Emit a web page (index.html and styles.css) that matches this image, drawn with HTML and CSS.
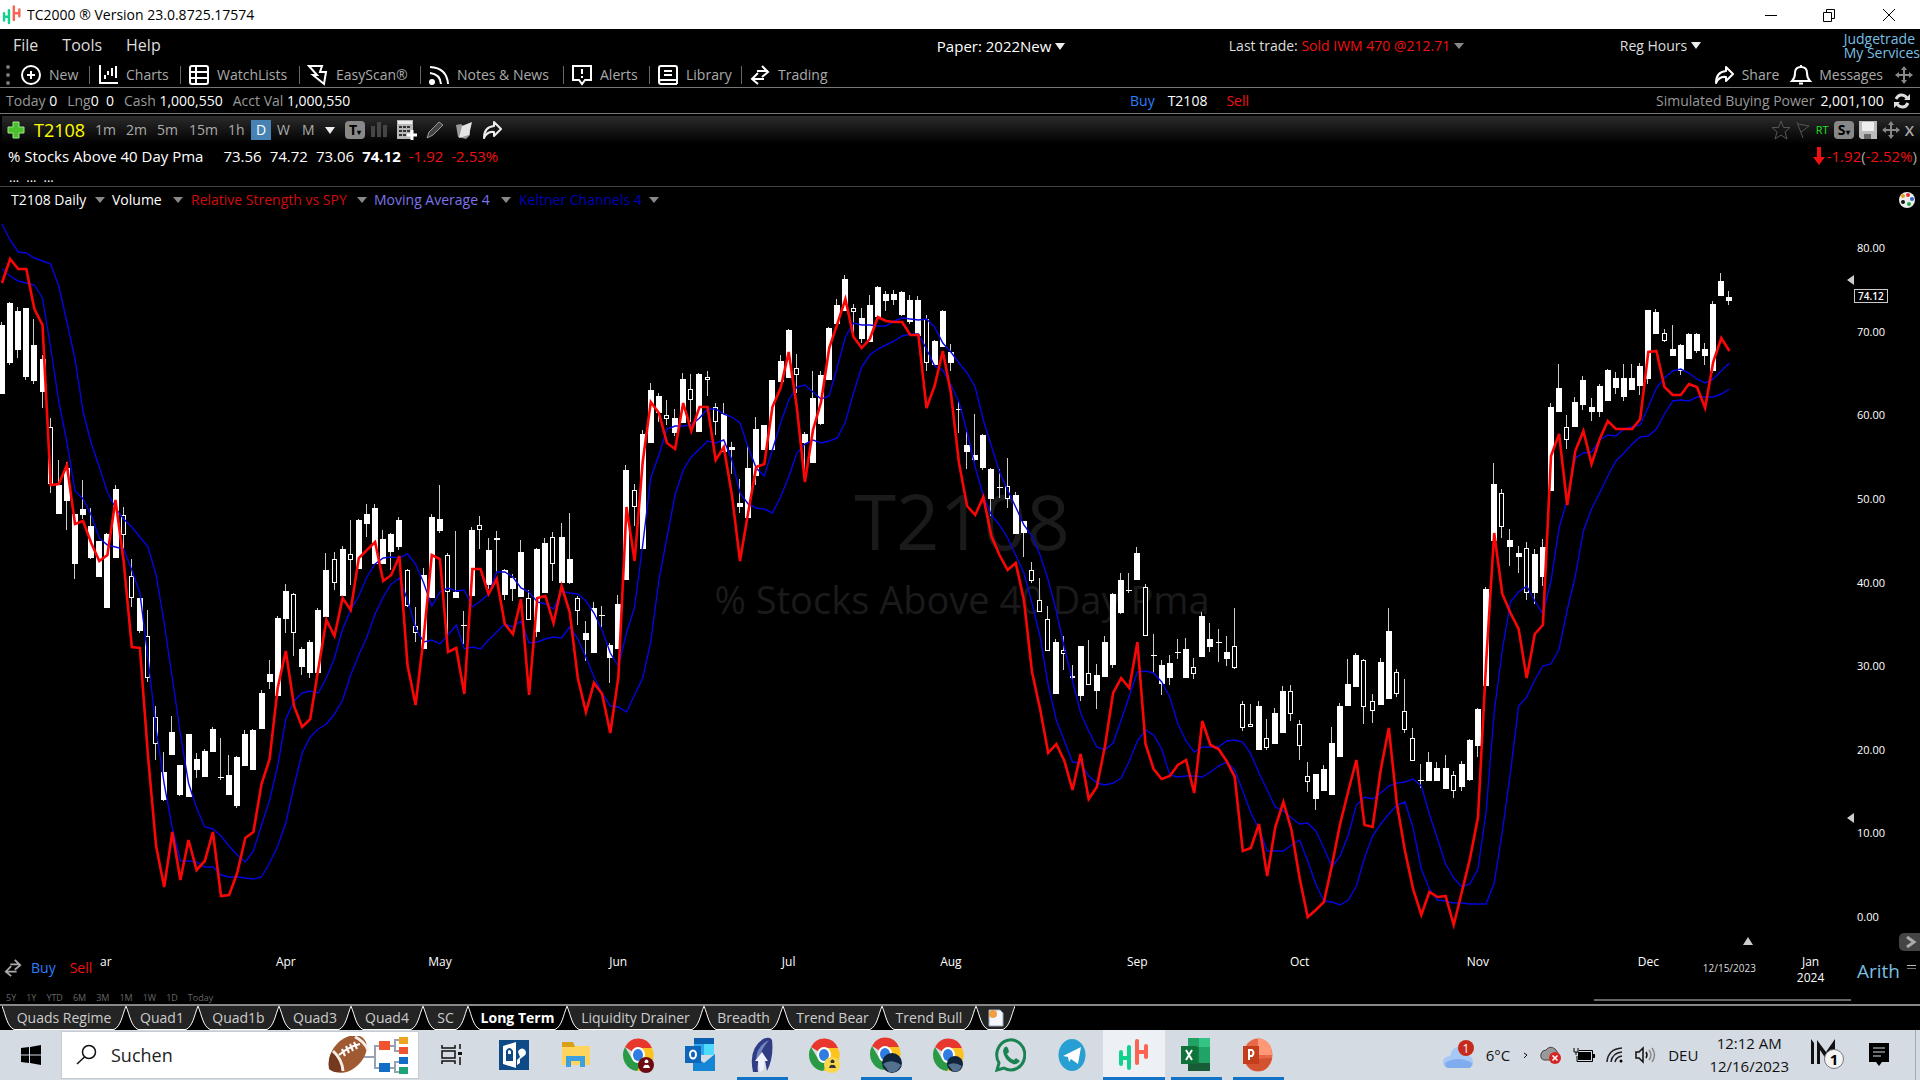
FILE: index.html
```html
<!DOCTYPE html>
<html lang="en">
    <head>
        <title>TC2000 &reg; Version 23.0.8725.17574</title>
        <meta charset="utf-8">
        <meta name="viewport" content="width=device-width, initial-scale=1">
        <link rel="stylesheet" href="styles.css">
    </head>
    <body>
        <!-- shared shapes -->
        <svg class="defs" width="0" height="0" aria-hidden="true">
            <symbol id="logo" viewBox="0 0 32 36">
                <g fill="none" stroke-width="4" stroke-linecap="round">
                    <path d="M3 15V27M11 10V31M3 21H11" stroke="#12d18c"/>
                    <path d="M19 4V26M28 9V20M19 15H28" stroke="#fb6450"/>
                </g>
            </symbol>
            <symbol id="share" viewBox="0 0 20 20">
                <path d="M12 2L19 9L12 16V12Q5 11 2 18Q2 7 12 6Z" fill="none" stroke="currentColor" stroke-width="2" stroke-linejoin="round"/>
            </symbol>
            <symbol id="swap" viewBox="0 0 20 20">
                <g fill="none" stroke="currentColor" stroke-width="2">
                    <path d="M7 6H18M12 1L18 7L12 12"/>
                    <path d="M14 14H2M8 8L2 14L8 19"/>
                </g>
            </symbol>
            <symbol id="move" viewBox="0 0 18 18">
                <path d="M9 0L12 4H10V8H14V6L18 9L14 12V10H10V14H12L9 18L6 14H8V10H4V12L0 9L4 6V8H8V4H6Z" fill="currentColor"/>
            </symbol>
            <symbol id="chrome" viewBox="0 0 32 36">
                <path d="M16 18L3 10A15 16 0 0 1 30 11H16Z" fill="#e8382d"/>
                <path d="M30 11A15 16 0 0 1 15 34L22 21L16 11Z" fill="#fcc31e"/>
                <path d="M3 10A15 16 0 0 0 15 34L22 22L9 20Z" fill="#2a9a47"/>
                <ellipse cx="16" cy="18" rx="7" ry="8" fill="#fff"/>
                <ellipse cx="16" cy="18" rx="5" ry="6" fill="#2f7de1"/>
            </symbol>
        </svg>

        <header class="titlebar">
            <svg class="app-logo"><use href="#logo"/></svg>
            <span class="app-title">TC2000 &reg; Version 23.0.8725.17574</span>
            <button class="win-btn" aria-label="Minimize"><svg width="14" height="14"><path d="M1 7.500H13" stroke="#000"/></svg></button>
            <button class="win-btn" aria-label="Restore"><svg width="14" height="14" fill="none" stroke="#000"><path d="M1.500 4.500H9.500V13.500H1.500ZM4.500 4V1.500H12.500V10.500H10"/></svg></button>
            <button class="win-btn" aria-label="Close"><svg width="14" height="14"><path d="M1 1L13 13M13 1L1 13" stroke="#000"/></svg></button>
        </header>

        <nav class="menubar">
            <div class="menus"><button>File</button><button>Tools</button><button>Help</button></div>
            <button class="account">Paper: 2022New <i class="arrow"></i></button>
            <button class="last-trade">Last trade: <span class="down">Sold IWM 470 @212.71</span> <i class="arrow dim"></i></button>
            <button class="hours">Reg Hours <i class="arrow"></i></button>
            <div class="links"><a href="#">Judgetrade</a><a href="#">My Services</a></div>
        </nav>

        <div class="toolbar">
            <div class="tools">
                <svg class="grip" width="6" height="20" fill="#777"><circle cx="3" cy="2" r="2"/><circle cx="3" cy="10" r="2"/><circle cx="3" cy="18" r="2"/></svg>
                <button><svg viewBox="0 0 20 20"><circle cx="10" cy="10" r="9"/><path d="M10 6V14M6 10H14"/></svg>New</button>
                <button><svg viewBox="0 0 20 20"><path d="M2 0V18H20M7 10V14M10 6V10M14 3V11M18 1V13"/></svg>Charts</button>
                <button><svg viewBox="0 0 20 20"><rect x="1" y="1" width="18" height="18" rx="2"/><path d="M7 1V19M1 7H19M1 13H19"/></svg>WatchLists</button>
                <button><svg viewBox="0 0 20 20"><path d="M1 1H14L12 7H18L16 19L5 10H9Z"/></svg>EasyScan&reg;</button>
                <button><svg viewBox="0 0 20 20"><circle cx="3" cy="17" r="2" fill="#fff"/><path d="M1 8Q11 9 12 19M1 2Q18 3 19 19"/></svg>Notes &amp; News</button>
                <button><svg viewBox="0 0 20 20"><path d="M1 1H19V15H13L10 19L7 15H1ZM10 4V9M10 11V13"/></svg>Alerts</button>
                <button><svg viewBox="0 0 20 20"><path d="M19 15H3Q1 15 1 17Q1 19 3 19H19M1 17V3Q1 1 3 1H17Q19 1 19 3V19M6 6H14M6 10H14"/></svg>Library</button>
                <button><svg><use href="#swap"/></svg>Trading</button>
            </div>
            <div class="tools-right">
                <button><svg><use href="#share"/></svg>Share</button>
                <button><svg viewBox="0 0 20 20"><path d="M1 16Q4 13 4 8Q4 2 10 2Q16 2 16 8Q16 13 19 16ZM10 0V2M8 18.500H12"/></svg>Messages</button>
                <svg class="move"><use href="#move"/></svg>
            </div>
        </div>

        <div class="balance">
            <div class="balance-left">
                <span>Today <b>0</b></span><span>Lng<b>0&nbsp; 0</b></span><span>Cash <b>1,000,550</b></span><span>Acct Val <b>1,000,550</b></span>
            </div>
            <div class="order"><button class="buy">Buy</button><b>T2108</b><button class="sell">Sell</button></div>
            <div class="power">Simulated Buying Power <b>2,001,100</b>
                <svg width="18" height="18" viewBox="0 0 18 18" fill="none" stroke="#ddd" stroke-width="3"><path d="M3 7Q6 1 12 4L14 6M15 11Q12 17 6 14L4 12"/><path d="M11 8H17V2ZM7 10H1V16Z" fill="#ddd" stroke="none"/></svg>
            </div>
        </div>

        <main class="chart">
            <div class="chart-head">
                <div class="frames">
                    <svg width="18" height="18" viewBox="0 0 18 18"><path d="M6 1H12V6H17V12H12V17H6V12H1V6H6Z" fill="#4cc02c" stroke="#a0e890"/></svg>
                    <span class="symbol">T2108</span>
                    <button>1m</button><button>2m</button><button>5m</button><button>15m</button><button>1h</button>
                    <button class="active">D</button><button>W</button><button>M</button>
                    <i class="arrow"></i>
                    <button class="chip" aria-label="Template">T<small>&#9662;</small></button>
                    <svg width="18" height="18" fill="#454545"><path d="M1 5H5V16H1ZM7 1H11V16H7ZM13 4H17V16H13Z"/></svg>
                    <svg width="20" height="20"><path d="M0 0H16V19H0Z" fill="#b8b8b8"/><path d="M1 1H15V4H1Z" fill="#eee"/><path d="M2 7H14M2 11H14M2 15H10" stroke="#333" stroke-width="2" stroke-dasharray="3 1"/><path d="M15 10V20M10 15H20" stroke="#fff" stroke-width="3"/></svg>
                    <svg width="18" height="18"><path d="M1 17L3 11L13 1L17 4L7 14Z" fill="#444" stroke="#999"/></svg>
                    <svg width="20" height="18"><path d="M2 4L7 3L9 5L16 2V14L12 18L4 16Z" fill="#999"/><path d="M8 5L18 1L15 14L5 17Z" fill="#e4e4e4"/></svg>
                    <svg class="share" width="20" height="20"><use href="#share"/></svg>
                </div>
                <div class="head-right">
                    <svg width="20" height="20" fill="none" stroke="#555"><path d="M10 1L12.500 7.500H19L14 12L16 19L10 15L4 19L6 12L1 7.500H7.500Z"/></svg>
                    <svg width="15" height="18" fill="none" stroke="#555"><path d="M1 1L7 17M2 3L13 5L5 11"/></svg>
                    <span class="rt">RT</span>
                    <button class="chip" aria-label="Style">S<small>&#9662;</small></button>
                    <svg width="18" height="18"><path d="M0 0H18V18H2L0 16Z" fill="#bbb"/><path d="M3 1H15V10H3Z" fill="#eee"/><path d="M5 13H12V18H5Z" fill="#666"/></svg>
                    <svg class="move"><use href="#move"/></svg>
                    <button class="close" aria-label="Close chart">X</button>
                </div>
            </div>

            <div class="quote">
                <span class="quote-name">% Stocks Above 40 Day Pma</span>
                <span>73.56</span><span>74.72</span><span>73.06</span><strong>74.12</strong>
                <span class="down">-1.92</span><span class="down">-2.53%</span>
                <span class="change"><svg width="12" height="18"><path d="M4 0H8V10H12L6 18L0 10H4Z" fill="#f01010"/></svg><span class="down">-1.92</span>(<span class="down">-2.52%</span>)</span>
            </div>
            <div class="more"><span>...</span><span>...</span><span>...</span></div>

            <div class="studies">
                <button>T2108 Daily</button><i class="arrow dim"></i>
                <button>Volume</button><i class="arrow dim"></i>
                <button class="rs">Relative Strength vs SPY</button><i class="arrow dim"></i>
                <button class="ma">Moving Average 4</button><i class="arrow dim"></i>
                <button class="kc">Keltner Channels 4</button><i class="arrow dim"></i>
                <svg class="palette" width="18" height="18"><circle cx="9" cy="9" r="8" fill="#eee"/><circle cx="5" cy="5" r="2" fill="#e0a020"/><circle cx="10" cy="4" r="2" fill="#d33"/><circle cx="14" cy="8" r="2" fill="#36c"/><circle cx="11" cy="13" r="2" fill="#2a4"/><circle cx="5" cy="11" r="2" fill="#111"/></svg>
            </div>

            <div class="stage">
                <div class="plot">
                    <div class="watermark"><div class="wm-symbol">T2108</div><div class="wm-name">% Stocks Above 40 Day Pma</div></div>
                    <svg id="plot" viewBox="0 215 1850 725" preserveAspectRatio="none"></svg>
                    <i class="range-mark range-top"></i>
                    <i class="range-mark range-bottom"></i>
                    <i class="date-mark"></i>
                </div>
                <div class="prices">
                    <span>80.00</span><span>70.00</span><span>60.00</span><span>50.00</span><span>40.00</span><span>30.00</span><span>20.00</span><span>10.00</span><span>0.00</span>
                    <div class="last-price">74.12</div>
                    <button class="scroll-end" aria-label="Scroll to end"><svg width="12" height="14" fill="none" stroke="#aaa" stroke-width="3"><path d="M2 2L9 7L2 12"/></svg></button>
                </div>
            </div>

            <div class="timeline">
                <div class="dates" id="dates"></div>
                <div class="scale"><button>Arith</button><i></i></div>
                <div class="quick"><svg width="18" height="20"><use href="#swap"/></svg><button class="buy">Buy</button><button class="sell">Sell</button></div>
                <div class="spans"><button>5Y</button><button>1Y</button><button>YTD</button><button>6M</button><button>3M</button><button>1M</button><button>1W</button><button>1D</button><button>Today</button></div>
                <div class="scrollbar"></div>
            </div>
        </main>

        <nav class="tabs" id="tabs">
            <button>Quads Regime</button>
            <button>Quad1</button>
            <button>Quad1b</button>
            <button>Quad3</button>
            <button>Quad4</button>
            <button>SC</button>
            <button class="current">Long Term</button>
            <button>Liquidity Drainer</button>
            <button>Breadth</button>
            <button>Trend Bear</button>
            <button>Trend Bull</button>
            <button aria-label="New layout"><svg class="new-tab" width="16" height="18"><path d="M1 1H12L15 4V17H1Z" fill="#f4f6ff" stroke="#9ab"/><circle cx="5" cy="5" r="4" fill="#f0a040"/></svg></button>
        </nav>

        <footer class="taskbar">
            <button class="start" aria-label="Start"><svg width="20" height="20"><path d="M0 3L8 2V9.500H0ZM9 2L20 0V9.500H9ZM0 10.500H8V18L0 17ZM9 10.500H20V20L9 18Z"/></svg></button>
            <label class="search">
                <svg width="22" height="22" fill="none" stroke="#111" stroke-width="1.500"><circle cx="13" cy="8" r="6.500"/><path d="M8.500 13L1 20"/></svg>
                <input type="text" placeholder="Suchen" aria-label="Suchen">
                <svg class="doodle" width="84" height="38" viewBox="0 0 84 38">
                    <path d="M38 21H49V10H54M49 21V32H54M63 10H69V4H75M69 10V15H75M63 32H69V26H75M69 32V36H75" fill="none" stroke="#98a2b4" stroke-width="2"/>
                    <ellipse cx="22" cy="18" rx="15" ry="22" transform="rotate(45 22 18)" fill="#a05a32"/>
                    <path d="M3 33Q1 22 7 15Q16 23 17 35Q8 38 3 33Z" fill="#74391f"/>
                    <path d="M7 15Q16 23 17 35M29 1Q38 5 42 14" fill="none" stroke="#f6efe8" stroke-width="3"/>
                    <path d="M13 19Q22 11 34 8M16 13L19 20M20 10L23 17M24 8L27 15M28 6L31 13" fill="none" stroke="#fff" stroke-width="2"/>
                    <path d="M53 5H64V14H53ZM73 11H82V18H73Z" fill="#f0532d"/><path d="M73 1H82V8H73Z" fill="#efa41d"/>
                    <path d="M53 27H64V36H53ZM73 21H82V28H73Z" fill="#126dc4"/><path d="M73 31H82V38H73Z" fill="#1da377"/>
                </svg>
            </label>
            <button class="app" aria-label="Task view"><svg width="22" height="22" fill="none" stroke="#111" stroke-width="1.500"><path d="M1 1V4H14V1M1 20V17H14V20M1 7H14V14H1ZM19 0V5M19 13V21"/><path d="M17 8H21V11H17Z" fill="#111" stroke="none"/></svg></button>
            <button class="app" aria-label="Password manager"><svg width="30" height="30"><path d="M0 0H30V30H0Z" fill="#0e4a85"/><path d="M4 6L17 2V28L4 24ZM19 12a4 4 0 1 1 6 4L21 19V23L18 25V20L21 17Z" fill="#fff"/><path d="M7 14H14V21H7Z" fill="#0e4a85"/><path d="M8 14V11Q10 7 13 11V14" fill="none" stroke="#0e4a85" stroke-width="2"/></svg></button>
            <button class="app" aria-label="Explorer"><svg width="28" height="26"><path d="M0 2H11L13 4H28V23H0Z" fill="#ffd560"/><path d="M0 0H11L13 5H0Z" fill="#d8a018"/><path d="M4 25V14H23V25H18V19H9V25Z" fill="#3c9fdf"/></svg></button>
            <button class="app" aria-label="Chrome"><svg width="32" height="36"><use href="#chrome"/><circle cx="24" cy="28" r="8" fill="#6c0c12"/><path d="M21 31H28Q27 27 24.500 28Q22 27 21 31M23 26a2 2 0 1 1 3 0Z" fill="#fff"/></svg></button>
            <button class="app" aria-label="Outlook"><svg width="30" height="34"><path d="M9 0H29V17H9Z" fill="#0a5faf"/><path d="M9 6H19V17H9Z" fill="#28a8ea"/><path d="M19 6H29V17H19Z" fill="#50d9ff"/><path d="M8 17L19 25L30 16V33H8Z" fill="#1685d6"/><path d="M0 8H16V25H0Z" fill="#0e66ba"/><ellipse cx="8" cy="16.500" rx="3" ry="4" fill="none" stroke="#fff" stroke-width="2"/></svg></button>
            <button class="app run" aria-label="Feather"><svg width="24" height="36"><path d="M3 35Q-2 12 13 2Q20 -1 22 3Q24 20 17 34L15 23Q12 15 9 22Q7 28 8 35Z" fill="#303c84"/><path d="M6 24Q6 9 19 3Q12 12 11 16Z" fill="#7184bd"/><path d="M10 35L8 24H5L12 15L18 24H14V32Z" fill="#eef2fa"/></svg></button>
            <button class="app" aria-label="Chrome"><svg width="32" height="36"><use href="#chrome"/><circle cx="24" cy="28" r="8" fill="#f9d84b"/><path d="M21 31H28Q27 27 24.500 28Q22 27 21 31M23 26a2 2 0 1 1 3 0Z" fill="#333"/></svg></button>
            <button class="app run" aria-label="Chrome"><svg width="34" height="38"><use href="#chrome" width="32" height="36"/><circle cx="23" cy="27" r="10" fill="#10243c"/><path d="M14 28Q22 22 32 29Q28 38 20 36Z" fill="#52718f"/></svg></button>
            <button class="app" aria-label="Chrome"><svg width="32" height="36"><use href="#chrome"/><circle cx="23" cy="27" r="8" fill="#10243c"/><path d="M16 28Q22 24 30 29Q27 36 21 34Z" fill="#52718f"/></svg></button>
            <button class="app" aria-label="WhatsApp"><svg width="32" height="38"><path d="M3 34L5 27A14 15 0 1 1 10 32Z" fill="none" stroke="#1a8352" stroke-width="3"/><path d="M10 12Q12 9 14 12L15 16L13 18Q16 23 20 24L22 22L26 25Q23 29 19 28Q10 24 9 15Z" fill="#1a8352"/></svg></button>
            <button class="app" aria-label="Telegram"><svg width="28" height="34"><ellipse cx="14" cy="17" rx="13.500" ry="16" fill="#279fd3"/><path d="M5 18L23 9L20 26L13 21L11 24L10 19Z" fill="#fff"/></svg></button>
            <button class="app run focus" aria-label="TC2000"><svg width="32" height="36"><use href="#logo"/></svg></button>
            <button class="app run" aria-label="Excel"><svg width="30" height="34"><path d="M7 0H29V33H7Z" fill="#21a366"/><path d="M7 9H18V25H7Z" fill="#107c41"/><path d="M18 0H29V9H18Z" fill="#33c481"/><path d="M7 25H29V33H7Z" fill="#185c37"/><path d="M0 8H16V26H0Z" fill="#0f7238"/><path d="M5 12L11 22M11 12L5 22" stroke="#fff" stroke-width="2"/></svg></button>
            <button class="app run" aria-label="PowerPoint"><svg width="30" height="34"><ellipse cx="15" cy="17" rx="14.500" ry="16.500" fill="#e8694a"/><path d="M15 0Q29 2 29 17H15Z" fill="#ff9877"/><path d="M2 24Q12 20 29 20Q26 33 15 33Q6 33 2 24Z" fill="#d35230"/><path d="M0 8H16V26H0Z" fill="#c43e1c"/><path d="M6 22V12H9Q12 14.500 9 18H6" fill="none" stroke="#fff" stroke-width="2"/></svg></button>

            <div class="tray">
                <svg width="32" height="32"><path d="M6 29Q0 29 0 23Q0 18 7 17Q9 7 17 8Q23 9 24 16Q31 18 30 25Q29 29 25 29Z" fill="#a5c8f5"/><path d="M2 24Q15 16 29 24Q29 29 25 29H6Q2 29 2 24Z" fill="#7eacec"/><circle cx="23" cy="9" r="8" fill="#c42b1c"/><text x="23" y="14" class="badge-text" fill="#fff">1</text></svg>
                <span>6&deg;C</span>
                <svg width="8" height="10"><path d="M3 3L6 5L3 8" fill="none" stroke="#111"/></svg>
                <svg width="22" height="20"><path d="M4 15Q0 14 1 9Q2 5 6 5Q10 0 15 4Q19 7 18 12L10 15Z" fill="#999" stroke="#444"/><circle cx="15" cy="13" r="6" fill="#d42424"/><path d="M12.500 10.500L17.500 15.500M17.500 10.500L12.500 15.500" stroke="#fff" stroke-width="1.500"/></svg>
                <svg width="22" height="16"><path d="M5 5H18V13H5ZM20 7H22V11H20Z" fill="#000"/><path d="M6 3.500H19.500V14.500H4V9M1 1V5H5V1M3 5V8" fill="none" stroke="#000"/></svg>
                <svg width="18" height="18" fill="none" stroke="#222" stroke-width="1.500"><path d="M1 16Q2 3 16 2M5 16Q6 7 16 6M9 16Q10 11 16 10"/><circle cx="15" cy="15" r="1.500" fill="#000" stroke="none"/></svg>
                <svg width="22" height="18" fill="none" stroke="#111" stroke-width="1.500"><path d="M1 6H4L8 2V16L4 12H1Z"/><path d="M11 6Q13 9 11 12"/><path d="M14 4Q18 9 14 14M17 2Q22 9 17 16" stroke="#888"/></svg>
                <span>DEU</span>
                <time>12:12 AM<br>12/16/2023</time>
                <svg class="mail" width="34" height="36"><path d="M1 2L4 6V27H1ZM7 3L16 15L25 2V27H21V12L16 22L10 13V27H7Z" fill="#111"/><circle cx="24" cy="22" r="9.500" fill="#f4f4f4" stroke="#777"/><text x="24" y="28" class="count-text">1</text></svg>
                <svg width="20" height="24"><path d="M0 0H20V19H13L10 23L7 19H0Z"/><path d="M4 5H16M4 9H16M4 13H12" stroke="#d5dbe3"/></svg>
            </div>
        </footer>

        <script src="chart.js"></script>
    </body>
</html>
```
FILE: styles.css
```css
* {
box-sizing: border-box;
}
body {
margin: 0;
min-height: 100vh;
display: flex;
flex-direction: column;
overflow: hidden;
background: #000;
color: #ccc;
font: 14px/20px "Open Sans", "Noto Sans", sans-serif;
}
button {
padding: 0;
border: 0;
background: none;
color: inherit;
font: inherit;
text-align: left;
white-space: nowrap;
}
b {
font-weight: normal;
color: #fff;
}
a {
color: #79bfe0;
text-decoration: none;
}
svg {
display: block;
flex: none;
}
.defs {
position: absolute;
}
.down, .sell {
color: #f01010;
}
.buy {
color: #2a7fff;
}
.arrow {
display: inline-block;
width: 0;
border: 5px solid transparent;
border-top: 7px solid #eee;
border-bottom: 0;
}
.account .arrow, .last-trade .arrow, .hours .arrow {
margin-bottom: 2px;
}
.arrow.dim {
border-width: 5px;
border-top: 6px solid #888;
border-bottom: 0;
}

/* title bar */
.titlebar {
height: 29px;
display: flex;
align-items: center;
background: #fff;
color: #000;
}
.app-logo {
width: 20px;
height: 22px;
margin: 0 5px 0 2px;
}
.app-title {
margin-right: auto;
}
.win-btn {
width: 58px;
height: 29px;
display: grid;
place-items: center;
}
.win-btn:last-child {
width: 62px;
}

/* menu */
.menubar {
height: 33px;
display: grid;
grid-template-columns: 937fr 292fr 391fr 224fr 76fr;
align-items: center;
color: #ddd;
}
.menus {
display: flex;
gap: 24px;
padding: 0 0 2px 13px;
font-size: 16px;
}
.account {
font-size: 15px;
color: #fff;
}
.links {
display: grid;
font-size: 14px;
line-height: 14px;
white-space: nowrap;
}

/* toolbar */
.toolbar {
height: 26px;
display: flex;
justify-content: space-between;
border-bottom: 1px solid #777;
color: #aaa;
}
.tools {
display: grid;
grid-template-columns: 21px 77px 91px 119px 121px 143px 86px 92px 90px;
align-items: center;
}
.grip {
margin-left: 5px;
}
.toolbar button {
display: flex;
align-items: center;
gap: 8px;
height: 25px;
}
.tools button + button {
position: relative;
}
.tools button + button::before {
content: "";
position: absolute;
left: -9px;
height: 18px;
border-left: 1px solid #666;
}
.toolbar button svg {
width: 20px;
height: 20px;
fill: none;
stroke: #fff;
stroke-width: 2;
color: #fff;
overflow: visible;
}
.toolbar use {
stroke: none;
}
.tools-right {
display: flex;
align-items: center;
gap: 12px;
padding-right: 7px;
}
.move {
width: 18px;
height: 18px;
color: #888;
}

/* account balance */
.balance {
height: 26px;
display: grid;
grid-template-columns: 1130fr 526fr 264fr;
align-items: center;
border-bottom: 1px solid #777;
color: #999;
}
.balance-left {
display: flex;
gap: 10px;
padding-left: 6px;
}
.order {
display: flex;
gap: 13px;
}
.order .sell {
margin-left: 6px;
}
.power {
display: flex;
align-items: center;
gap: 6px;
white-space: nowrap;
}
.power svg {
margin-left: 3px;
}

/* chart header */
.chart {
flex: 1;
display: flex;
flex-direction: column;
}
.chart-head {
height: 28px;
margin: 2px 0 0 2px;
display: flex;
justify-content: space-between;
align-items: center;
background: linear-gradient(#2b2b2b, #000);
color: #aaa;
}
.frames {
display: grid;
grid-template-columns: 27px 61px 31px 31px 32px 39px 23px 26px 25px 23px 20px 25px 27px 29px 28px 28px 20px;
align-items: center;
padding-left: 5px;
}
.symbol {
color: #ff0;
font-size: 18px;
}
.frames .active {
width: 20px;
background: #4682b4;
color: #fff;
text-align: center;
}
.chip {
width: 20px;
height: 18px;
border-radius: 4px;
background: #888;
color: #000;
font-weight: bold;
line-height: 18px;
text-align: center;
}
.chip small {
font-size: 8px;
}
.share {
color: #eee;
}
.head-right {
display: flex;
align-items: center;
gap: 5px;
padding-right: 6px;
}
.rt {
color: #1be01b;
font-size: 11px;
}
.close {
font-size: 15px;
font-weight: 600;
}
.quote {
height: 24px;
display: flex;
align-items: center;
gap: 8px;
padding: 0 3px 0 8px;
color: #fff;
font-size: 15px;
}
.quote-name {
margin-right: 12px;
}
.change {
display: flex;
align-items: center;
margin-left: auto;
color: #aaa;
}
.change svg {
margin-right: 2px;
}
.more {
height: 19px;
display: flex;
gap: 7px;
padding-left: 9px;
border-bottom: 1px solid #444;
color: #fff;
font-size: 13px;
line-height: 18px;
}
.studies {
height: 28px;
display: grid;
grid-template-columns: 84px 17px 61px 18px 166px 17px 127px 18px 130px 20px 1fr;
align-items: center;
padding: 0 4px 2px 11px;
color: #fff;
}
.rs {
color: #d00c0c;
}
.ma {
color: #7c74e8;
}
.kc {
color: #0000b8;
}
.palette {
justify-self: end;
}

/* plot */
.stage {
flex: 1;
display: grid;
grid-template-columns: 1fr 70px;
}
.plot {
position: relative;
display: grid;
}
#plot {
position: absolute;
inset: 0;
width: 100%;
height: 100%;
}
.watermark {
align-self: center;
padding: 0 0 45px 74px;
color: #1a1a1a;
text-align: center;
}
.wm-symbol {
font-size: 76px;
line-height: 88px;
}
.wm-name {
font-size: 38px;
line-height: 68px;
}
.range-mark {
position: absolute;
right: -4px;
border: 5px solid transparent;
border-right: 7px solid #ccc;
border-left: 0;
}
.range-top {
top: 60px;
}
.range-bottom {
bottom: 117px;
}
.date-mark {
position: absolute;
right: 97px;
bottom: -5px;
border: 5px solid transparent;
border-bottom: 8px solid #ccc;
border-top: 0;
}
.prices {
position: relative;
display: flex;
flex-direction: column;
justify-content: space-between;
padding: 25px 0 15px 7px;
color: #fff;
font-size: 11px;
line-height: 16px;
}
.last-price {
position: absolute;
top: 74px;
left: 4px;
padding: 0 3px;
border: 1px solid #ccc;
background: #000;
font-size: 10px;
font-weight: 600;
line-height: 12px;
}
.scroll-end {
position: absolute;
right: 0;
bottom: -11px;
width: 21px;
height: 18px;
padding-left: 6px;
border-radius: 5px 0 0 5px;
background: #444;
}

/* dates */
.timeline {
position: relative;
height: 64px;
display: grid;
grid-template-columns: 1fr 70px;
}
.dates {
position: relative;
overflow: hidden;
color: #fff;
font-size: 12px;
line-height: 16px;
text-align: center;
}
.dates span {
position: absolute;
top: 14px;
transform: translateX(-50%);
}
.dates .cursor-date {
top: 20px;
color: #ddd;
font-size: 10px;
}
.scale {
display: flex;
gap: 7px;
padding: 17px 0 0 7px;
color: #79bfe0;
font-size: 19px;
line-height: 28px;
}
.scale button {
height: 28px;
}
.scale i {
width: 9px;
height: 4px;
margin-top: 8px;
border-top: 1px solid #bbb;
border-bottom: 1px solid #777;
}
.quick {
position: absolute;
left: 4px;
top: 18px;
display: flex;
align-items: center;
gap: 9px;
color: #aaa;
background: #000;
}
.quick .sell {
margin-left: 5px;
}
.spans {
position: absolute;
left: 6px;
bottom: 0;
display: flex;
gap: 10px;
color: #666;
font-size: 9px;
line-height: 12px;
}
.scrollbar {
position: absolute;
left: 83%;
right: 69px;
bottom: 3px;
height: 2px;
background: #666;
}

/* layout tabs */
.tabs {
height: 26px;
display: grid;
grid-template-columns: 124px 72px 81px 72px 72px 45px 99px 137px 79px 99px 94px 39px;
padding-left: 2px;
border-top: 2px solid #888;
}
.tabs button {
display: flex;
height: 24px;
line-height: 24px;
}
.tabs .label {
flex: 1;
min-width: 0;
display: flex;
justify-content: center;
background: #242424;
border-bottom: 1px solid #fff;
z-index: 1;
}
.edge {
width: 14px;
height: 24px;
fill: #242424;
}
.edge.right {
transform: scaleX(-1);
}
.tabs .current {
color: #fff;
font-weight: bold;
}
.current .edge {
fill: #000;
}
.tabs .current .label {
background: #000;
}
.new-tab {
margin-top: 3px;
}

/* taskbar */
.taskbar {
height: 50px;
display: flex;
align-items: center;
background: #d5dbe3;
color: #111;
}
.start {
width: 61px;
height: 50px;
display: grid;
place-items: center;
}
.search {
width: 358px;
height: 48px;
display: flex;
align-items: center;
gap: 13px;
margin-right: 2px;
padding: 0 8px 0 14px;
background: #fff;
border: 1px solid #c8ccd2;
}
.search input {
flex: 1;
min-width: 0;
padding: 0;
border: 0;
color: #222;
font: 18px/24px "Open Sans", "Noto Sans", sans-serif;
}
.search input::placeholder {
color: #222;
}
.app {
width: 62px;
height: 50px;
display: grid;
place-items: center;
}
.run {
background: linear-gradient(#1273c8, #1273c8) center bottom / 51px 3px no-repeat;
}
.focus {
background: linear-gradient(#1273c8, #1273c8) center bottom / 100% 3px no-repeat #edf1f5;
}
.tray {
display: flex;
align-items: center;
gap: 11px;
height: 50px;
margin-left: auto;
margin-right: 4px;
padding-right: 26px;
border-right: 1px solid #a4aab2;
}
.tray span, .tray time {
font-size: 15px;
line-height: 23px;
text-align: center;
}
.mail {
margin: 0 14px 0 10px;
}
.badge-text {
font-size: 12px;
text-anchor: middle;
}
.count-text {
font-size: 15px;
font-weight: bold;
text-anchor: middle;
}
```
FILE: chart.js
```js
var STEP = 8.11;
var WIDTH = 1850;

// one entry per day: high, body top, body bottom, low; trailing o = hollow body
var candles = ("322,325,394,394 302,303,363,365 307,311,350,358 308,308,377,380 319,345,381,384 355,359,392,408 418,427,484,493o 460,485,514,514 462,468,501,530 514,514,564,579 " +
"480,509,515,519 508,526,558,559 541,541,577,577 533,534,608,608 485,489,558,558 507,515,535,549o 559,576,598,607o 598,598,631,633 610,636,678,682o 706,717,744,760o " +
"752,772,800,801 716,732,755,755 765,765,795,796 734,734,797,797 753,759,770,778 749,751,777,777 727,729,752,752 738,777,778,780 755,775,795,795 756,757,806,808 " +
"730,734,766,766 729,730,770,770 690,693,729,729 660,674,682,689 616,618,696,696 584,591,619,633 593,594,633,656o 647,649,667,675 640,642,673,678 608,610,673,673 " +
"553,570,617,617 552,559,583,590o 546,549,596,596 520,554,560,585o 519,520,569,569 504,514,524,537 504,508,564,564 530,539,564,564 533,534,552,570 517,520,547,550 " +
"569,570,606,607o 607,626,633,642o 568,575,649,649 514,517,598,598 485,519,531,533 553,555,592,637o 531,592,598,598 611,625,626,644 527,530,596,596 516,525,530,549o " +
"538,550,585,589 531,538,540,574 569,570,595,600 574,578,589,601 540,552,597,597 590,598,620,620o 548,549,632,637 538,543,593,593 532,537,564,581o 523,537,583,583 " +
"513,559,583,584 596,598,611,625o 621,633,640,661 602,608,653,653 606,615,616,627 643,645,658,683 595,604,649,649 465,470,580,580 484,490,507,526o 430,434,549,549 " +
"383,390,443,443 393,396,413,422 400,415,419,425o 409,418,433,436 373,379,423,423 374,389,400,422o 373,374,432,432 371,377,380,396o 403,407,422,435o 403,414,452,452 " +
"442,447,450,474 479,503,507,513 444,468,518,518 417,429,476,485 425,425,450,450 380,380,450,450 355,361,382,382 329,330,378,378 354,368,375,393o 432,434,443,480 " +
"371,398,463,463 371,375,424,425 327,328,380,380 299,305,324,324 275,279,311,311 304,308,312,333o 308,318,339,343 295,305,342,342 286,287,317,317 291,294,301,311 " +
"290,294,300,305 291,292,315,316 295,300,322,324 296,300,336,336 315,319,363,371o 340,341,365,365 310,311,347,347 344,352,363,371 402,409,410,433 432,445,452,469 " +
"414,455,460,461 434,435,468,470 468,469,499,516 469,487,488,498 458,486,499,508o 492,495,534,534 521,521,533,557 562,570,581,583o 578,600,612,612o 606,619,651,651o " +
"639,642,694,694 636,650,654,670o 665,676,678,682o 646,646,696,701 640,673,685,685o 664,675,691,709 636,642,677,677 593,594,665,668 573,580,613,614 573,590,591,593 " +
"547,553,580,580 584,587,636,636o 634,655,656,674 660,665,684,695 655,663,678,685 639,652,653,659 638,649,678,678 658,667,674,679o 612,616,657,657 623,639,647,652 " +
"629,642,643,662 636,652,659,666 608,646,668,669o 701,704,728,731o 704,724,727,727o 701,706,750,750 719,738,748,750o 708,713,744,744 686,691,733,733 685,691,714,721o " +
"720,724,746,760o 762,776,782,792o 774,774,799,810 765,769,791,791 727,743,795,795 703,706,757,757 659,684,706,706 653,655,687,687 659,660,707,724o 694,701,711,723o " +
"658,662,705,705 608,631,699,699 669,672,694,697o 679,711,730,733o 728,738,761,761o 764,780,781,788 752,762,781,781 762,768,781,781 755,768,789,789 771,775,791,798o " +
"761,764,787,791 739,740,780,781 708,709,746,757 587,589,686,686 463,484,541,541 489,493,527,538o 529,540,547,566 546,553,557,573 542,548,593,600o 549,554,593,604 " +
"539,547,577,586 403,407,491,491 364,388,412,412 415,427,440,449o 397,402,427,427 376,380,405,410 398,407,412,421 384,386,412,417 369,370,401,401 372,378,388,394 " +
"364,378,397,401 364,378,390,390 363,366,386,395 310,310,379,384 309,312,334,334 329,333,341,342o 325,349,356,356 344,345,371,375 333,334,359,359 333,334,351,353 " +
"343,349,356,365 301,304,371,373 273,281,296,296 291,297,301,305").split(" ");

var strength = [283,259,269,269,309,325,485,484,465,524,521,543,561,555,500,561,647,648,756,846,887,832,880,840,870,861,832,896,895,873,
838,832,784,759,688,651,706,727,719,669,620,636,598,610,558,550,542,581,575,556,665,705,637,555,559,652,648,694,569,569,
594,579,624,634,599,695,598,596,623,586,612,678,712,683,694,733,677,507,561,462,402,413,443,449,403,431,407,407,460,447,
495,561,513,467,464,407,388,352,407,482,430,402,348,324,299,337,348,339,317,321,322,322,335,335,408,386,351,393,463,506,
515,497,536,555,570,563,600,672,709,753,744,761,790,754,799,787,746,693,678,688,642,744,769,779,776,765,760,793,721,745,
749,761,777,851,848,824,876,827,802,830,878,917,910,902,865,824,791,760,825,827,770,728,804,851,889,915,892,897,896,925,
892,859,817,663,533,594,613,629,678,634,625,456,434,505,451,431,464,439,421,429,429,429,419,352,351,387,395,395,384,387,
408,362,338,351];

var upper = [224,240,252,253,258,261,264,286,322,359,412,443,467,492,508,519,527,537,547,575,623,678,734,783,808,827,829,836,846,855,
862,851,825,800,766,719,701,693,691,693,678,658,629,610,596,577,564,558,557,558,554,564,583,606,592,588,591,590,607,601,
594,572,572,577,588,592,602,604,609,591,593,594,601,613,630,653,666,633,607,545,478,455,429,426,426,425,418,409,409,414,
417,423,447,468,476,450,423,400,387,385,392,399,396,367,337,323,325,325,326,326,321,318,319,320,319,327,343,352,363,373,
387,420,446,472,490,507,525,536,555,580,611,648,681,713,731,747,750,743,720,696,672,671,673,682,697,724,741,752,747,747,
747,741,740,742,754,773,790,807,811,818,824,823,831,848,867,856,835,805,797,799,793,786,783,782,779,786,814,839,864,878,
887,884,869,812,712,650,602,592,586,601,614,581,528,500,458,453,452,440,435,436,429,427,425,407,388,378,371,369,373,379,
383,379,371,363];

var lower = [269,276,281,283,285,298,348,402,442,491,499,515,538,545,547,549,570,593,658,729,784,828,861,861,862,867,867,875,877,877,
878,879,877,863,846,823,786,753,737,729,724,714,700,675,655,637,614,597,584,578,600,628,642,640,644,635,625,649,647,649,
640,632,624,627,621,643,642,639,637,638,627,639,657,677,693,706,707,712,695,678,642,580,537,495,470,457,449,441,443,440,
460,493,504,508,509,513,497,477,453,444,440,443,441,438,422,393,367,355,349,345,341,336,334,334,349,366,370,385,402,432,
467,496,515,525,538,555,573,603,637,685,720,741,762,763,776,783,785,783,778,761,741,730,735,749,775,777,776,776,777,772,
766,762,770,791,813,829,851,851,851,845,840,861,884,901,902,905,900,886,858,836,824,814,805,802,828,869,889,900,901,903,
903,904,904,904,883,832,772,706,697,680,666,664,649,610,576,531,509,493,476,461,453,444,437,436,429,414,401,400,401,397,
397,397,394,389];

// label, day index
var months = [["ar", 12.8], ["Apr", 35], ["May", 54], ["Jun", 76], ["Jul", 97], ["Aug", 117], ["Sep", 140], ["Oct", 160], ["Nov", 182], ["Dec", 203], ["Jan<br>2024", 223]];

function dayX(i) {
    return 2 + STEP * i;
}

function line(values, color, width) {
    var points = values.map(function (y, i) {
        return dayX(i).toFixed(1) + "," + y;
    });
    return '<polyline points="' + points.join(" ") + '" fill="none" stroke="' + color + '" stroke-width="' + width + '"/>';
}

function candle(text, i) {
    var hollow = text.slice(-1) == "o";
    var v = text.replace("o", "").split(",").map(Number);
    var x = Math.round(dayX(i)) - 1;
    var height = Math.max(v[2] - v[1], 1);
    var out = '<path d="M' + (x + 0.5) + ' ' + v[0] + 'V' + v[3] + '" stroke="#ccc"/>';
    if (hollow) {
        return out + '<rect x="' + (x - 1.5) + '" y="' + (v[1] + 0.5) + '" width="4" height="' + Math.max(height - 1, 1) + '" fill="#000" stroke="#fff"/>';
    }
    return out + '<rect x="' + (x - 2) + '" y="' + v[1] + '" width="6" height="' + height + '" fill="#fff"/>';
}

document.getElementById("plot").innerHTML =
    '<g shape-rendering="crispEdges">' + candles.map(candle).join("") + '</g>' +
    line(upper, "#0505e0", 1.4) + line(lower, "#0505e0", 1.4) + line(strength, "#fb0606", 2.6);

document.getElementById("dates").innerHTML = months.map(function (m) {
    return '<span style="left:' + (dayX(m[1]) / WIDTH * 100).toFixed(2) + '%">' + m[0] + '</span>';
}).join("") + '<span class="cursor-date" style="left:' + (dayX(213) / WIDTH * 100).toFixed(2) + '%">12/15/2023</span>';

// slanted sides of the layout tabs
var slant = '<path d="M0 0C4 10 5 20 12 23.500H14V0Z"/><path d="M0 0C4 10 5 20 12 23.500H14" fill="none" stroke="#fff"/></svg>';
document.querySelectorAll("#tabs button").forEach(function (tab) {
    tab.innerHTML = '<svg class="edge">' + slant + '<span class="label">' + tab.innerHTML + '</span><svg class="edge right">' + slant;
});
```
